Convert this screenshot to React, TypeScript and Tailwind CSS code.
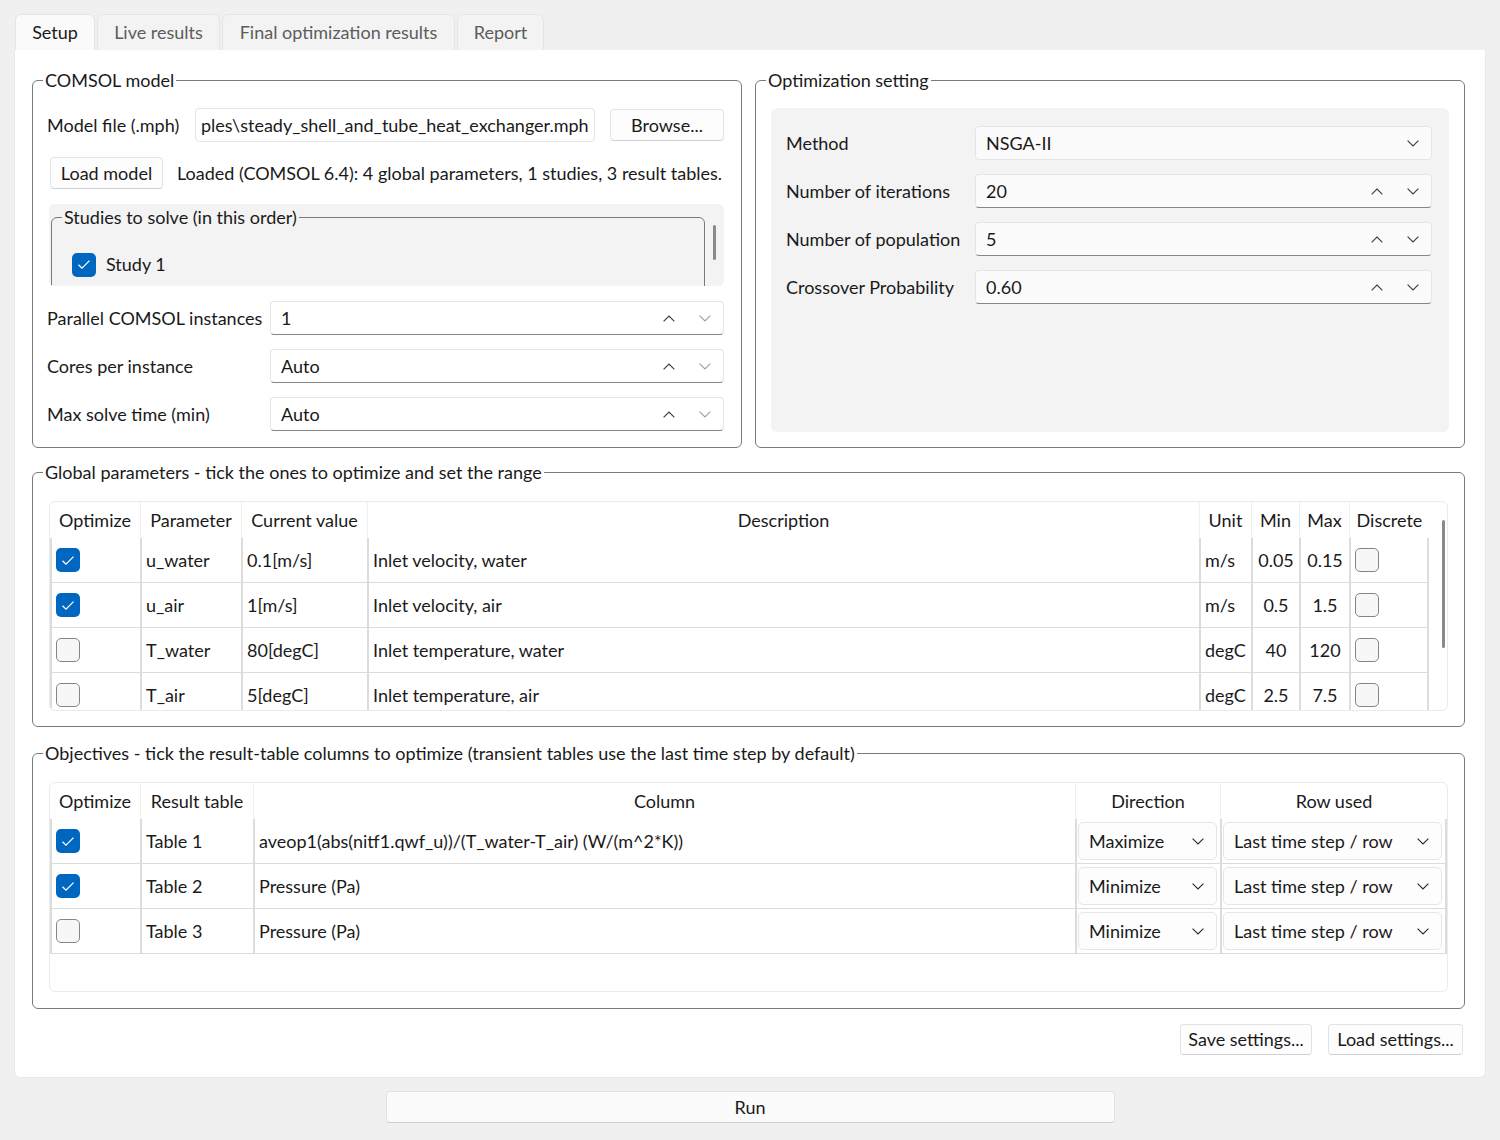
import React from 'react';

const ChevDown = ({ className = '' }: { className?: string }) => (
  <svg width="12" height="7" viewBox="0 0 12 7" fill="none" className={className}>
    <path d="M0.6 0.6 L6 6 L11.4 0.6" stroke="currentColor" strokeWidth="1.1" />
  </svg>
);

const ChevUp = ({ className = '' }: { className?: string }) => (
  <svg width="12" height="7" viewBox="0 0 12 7" fill="none" className={className}>
    <path d="M0.6 6.4 L6 1 L11.4 6.4" stroke="currentColor" strokeWidth="1.1" />
  </svg>
);

const Check = ({ checked }: { checked: boolean }) =>
  checked ? (
    <span className="flex h-[24px] w-[24px] shrink-0 items-center justify-center rounded-[5px] bg-[#0067c0]">
      <svg width="14" height="11" viewBox="0 0 14 11" fill="none">
        <path d="M1.5 5.8 L5 9.2 L12.5 1.6" stroke="white" strokeWidth="1.3" />
      </svg>
    </span>
  ) : (
    <span className="h-[24px] w-[24px] shrink-0 rounded-[5px] border border-[#858585] bg-[#f7f7f7]" />
  );

// groupbox = fieldset, title sits on the top border
function GroupBox({ title, className, bodyClass, children }: { title: string; className: string; bodyClass: string; children: React.ReactNode }) {
  return (
    <fieldset className={`min-w-0 rounded-[6px] border border-[#7a7a7a] ${className}`}>
      <legend className="ml-[10px] px-[2px] leading-[24px]">{title}</legend>
      <div className={bodyClass}>{children}</div>
    </fieldset>
  );
}

function SpinBox({ value, dimDown, bg }: { value: string; dimDown?: boolean; bg: string }) {
  return (
    <div className={`flex h-[34px] flex-1 items-center rounded-[4px] border border-[#e5e5e5] border-b-[#868686] pl-[10px] pr-[12px] ${bg}`}>
      <span className="flex-1">{value}</span>
      <ChevUp className="text-[#3a3a3a]" />
      <ChevDown className={dimDown ? 'ml-[24px] text-[#a0a0a0]' : 'ml-[24px] text-[#3a3a3a]'} />
    </div>
  );
}

function Button({ label, className }: { label: string; className: string }) {
  return (
    <div className={`flex items-center justify-center rounded-[4px] border border-[#e3e3e3] border-b-[#d0d0d0] ${className}`}>
      {label}
    </div>
  );
}

const params = [
  { on: true, name: 'u_water', val: '0.1[m/s]', desc: 'Inlet velocity, water', unit: 'm/s', min: '0.05', max: '0.15' },
  { on: true, name: 'u_air', val: '1[m/s]', desc: 'Inlet velocity, air', unit: 'm/s', min: '0.5', max: '1.5' },
  { on: false, name: 'T_water', val: '80[degC]', desc: 'Inlet temperature, water', unit: 'degC', min: '40', max: '120' },
  { on: false, name: 'T_air', val: '5[degC]', desc: 'Inlet temperature, air', unit: 'degC', min: '2.5', max: '7.5' },
];

const objectives = [
  { on: true, table: 'Table 1', col: 'aveop1(abs(nitf1.qwf_u))/(T_water-T_air) (W/(m^2*K))', dir: 'Maximize' },
  { on: true, table: 'Table 2', col: 'Pressure (Pa)', dir: 'Minimize' },
  { on: false, table: 'Table 3', col: 'Pressure (Pa)', dir: 'Minimize' },
];

const hCell = 'flex h-[36px] items-center justify-center border-l border-[#f0f0f0] first:border-l-0';
const bCell = 'flex h-[45px] items-center border-b border-l-2 border-[#dcdcdc] first:border-l-0 px-[4px]';

function ParamTable() {
  return (
    <div className="flex h-[210px] overflow-hidden rounded-[6px] border border-[#ebebeb]">
      <div className="grid w-[1379px] grid-cols-[90px_101px_126px_832px_52px_48px_50px_80px] content-start">
        {['Optimize', 'Parameter', 'Current value', 'Description', 'Unit', 'Min', 'Max', 'Discrete'].map((h) => (
          <div key={h} className={hCell}>{h}</div>
        ))}
        {params.map((p) => (
          <React.Fragment key={p.name}>
            <div className={bCell}><Check checked={p.on} /></div>
            <div className={bCell}>{p.name}</div>
            <div className={bCell}>{p.val}</div>
            <div className={bCell}>{p.desc}</div>
            <div className={bCell}>{p.unit}</div>
            <div className={`${bCell} justify-center`}>{p.min}</div>
            <div className={`${bCell} justify-center`}>{p.max}</div>
            <div className={`${bCell} border-r-2`}><Check checked={false} /></div>
          </React.Fragment>
        ))}
      </div>
      <div className="flex flex-1 justify-end pr-[2px] pt-[18px]">
        <div className="h-[128px] w-[3px] rounded-full bg-[#8a8a8a]" />
      </div>
    </div>
  );
}

function Combo({ value }: { value: string }) {
  return (
    <div className="flex h-[38px] w-full items-center rounded-[5px] border border-[#e6e6e6] bg-[#fdfdfd] pl-[10px] pr-[12px]">
      <span className="flex-1">{value}</span>
      <ChevDown className="text-[#2a2a2a]" />
    </div>
  );
}

function ObjTable() {
  return (
    <div className="h-[210px] overflow-hidden rounded-[6px] border border-[#ebebeb]">
      <div className="grid grid-cols-[90px_113px_1fr_145px_227px] content-start">
        {['Optimize', 'Result table', 'Column', 'Direction', 'Row used'].map((h) => (
          <div key={h} className={hCell}>{h}</div>
        ))}
        {objectives.map((o) => (
          <React.Fragment key={o.table}>
            <div className={bCell}><Check checked={o.on} /></div>
            <div className={bCell}>{o.table}</div>
            <div className={bCell}>{o.col}</div>
            <div className={`${bCell} pl-[1px] pr-[3px]`}><Combo value={o.dir} /></div>
            <div className={`${bCell} border-r-2 pl-[1px] pr-[3px]`}><Combo value="Last time step / row" /></div>
          </React.Fragment>
        ))}
      </div>
    </div>
  );
}

export default function App() {
  const tabs = [
    { label: 'Setup', w: 'w-[80px]', active: true },
    { label: 'Live results', w: 'w-[123px]', active: false },
    { label: 'Final optimization results', w: 'w-[233px]', active: false },
    { label: 'Report', w: 'w-[87px]', active: false },
  ];

  return (
    <div className="min-h-[1140px] bg-[#f0f0f0] pt-[14px] font-['Lato','Noto_Sans',sans-serif] text-[18px] text-[#1a1a1a]">
      <div className="ml-[15px] flex gap-[2px]">
        {tabs.map((t) => (
          <div
            key={t.label}
            className={`flex h-[36px] items-center justify-center rounded-t-[6px] border border-b-0 border-[#e5e5e5] ${t.w} ${
              t.active ? 'bg-[#fafafa] text-[#1a1a1a]' : 'bg-[#f3f3f3] text-[#5c5c5c]'
            }`}
          >
            {t.label}
          </div>
        ))}
      </div>

      <div className="mx-[14px] rounded-b-[6px] border border-t-0 border-[#e8e8e8] bg-white pb-[22px] pl-[17px] pr-[20px] pt-[18px]">
        <div className="flex gap-[13px]">
          <GroupBox title="COMSOL model" className="w-[710px] shrink-0" bodyClass="pb-[16px] pl-[14px] pr-[17px] pt-[16px]">
            <div className="flex h-[34px] items-center">
              <span className="w-[148px]">Model file (.mph)</span>
              <div className="flex h-[34px] w-[400px] items-center overflow-hidden whitespace-nowrap rounded-[4px] border border-[#e5e5e5] pl-[5px]">
                ples\steady_shell_and_tube_heat_exchanger.mph
              </div>
              <Button label="Browse..." className="ml-[15px] h-[32px] w-[114px] bg-[#fdfdfd]" />
            </div>
            <div className="mt-[15px] flex h-[32px] items-center">
              <Button label="Load model" className="ml-[3px] h-[32px] w-[113px] bg-[#fdfdfd]" />
              <span className="ml-[14px] whitespace-nowrap">Loaded (COMSOL 6.4): 4 global parameters, 1 studies, 3 result tables.</span>
            </div>
            <div className="ml-[2px] mt-[15px] flex h-[82px] w-[675px] overflow-hidden rounded-[5px] bg-[#f3f3f3] pl-[2px] pt-[1px]">
              <GroupBox title="Studies to solve (in this order)" className="h-[110px] w-[654px] shrink-0" bodyClass="pl-[20px] pt-[22px]">
                <div className="flex items-center gap-[10px]">
                  <Check checked={true} />
                  <span>Study 1</span>
                </div>
              </GroupBox>
              <div className="flex flex-1 justify-center pt-[20px]">
                <div className="h-[35px] w-[3px] rounded-full bg-[#8a8a8a]" />
              </div>
            </div>
            {['Parallel COMSOL instances', 'Cores per instance', 'Max solve time (min)'].map((l, i) => (
              <div key={l} className={`flex items-center ${i === 0 ? 'mt-[15px]' : 'mt-[14px]'}`}>
                <span className="w-[223px] whitespace-nowrap">{l}</span>
                <SpinBox value={i === 0 ? '1' : 'Auto'} dimDown bg="bg-white" />
              </div>
            ))}
          </GroupBox>

          <GroupBox title="Optimization setting" className="w-[710px] shrink-0" bodyClass="px-[15px] pb-[15px] pt-[16px]">
            <div className="flex h-[324px] flex-col gap-[14px] rounded-[6px] bg-[#f3f3f3] pl-[15px] pr-[17px] pt-[18px]">
              <div className="flex items-center">
                <span className="w-[189px]">Method</span>
                <div className="flex h-[34px] flex-1 items-center rounded-[4px] border border-[#e5e5e5] bg-[#fbfbfb] pl-[10px] pr-[12px]">
                  <span className="flex-1">NSGA-II</span>
                  <ChevDown className="text-[#3a3a3a]" />
                </div>
              </div>
              {[
                ['Number of iterations', '20'],
                ['Number of population', '5'],
                ['Crossover Probability', '0.60'],
              ].map(([l, v]) => (
                <div key={l} className="flex items-center">
                  <span className="w-[189px] whitespace-nowrap">{l}</span>
                  <SpinBox value={v} bg="bg-[#fbfbfb]" />
                </div>
              ))}
            </div>
          </GroupBox>
        </div>

        <GroupBox title="Global parameters - tick the ones to optimize and set the range" className="mt-[12px]" bodyClass="px-[16px] pb-[15px] pt-[17px]">
          <ParamTable />
        </GroupBox>

        <GroupBox
          title="Objectives - tick the result-table columns to optimize (transient tables use the last time step by default)"
          className="mt-[14px]"
          bodyClass="px-[16px] pb-[16px] pt-[17px]"
        >
          <ObjTable />
        </GroupBox>

        <div className="mt-[15px] flex justify-end gap-[16px] pr-[2px]">
          <Button label="Save settings..." className="h-[31px] w-[132px] bg-[#fdfdfd]" />
          <Button label="Load settings..." className="h-[31px] w-[135px] bg-[#fdfdfd]" />
        </div>
      </div>

      <div className="mt-[13px] flex justify-center">
        <Button label="Run" className="h-[32px] w-[729px] bg-[#fbfbfb]" />
      </div>
    </div>
  );
}
